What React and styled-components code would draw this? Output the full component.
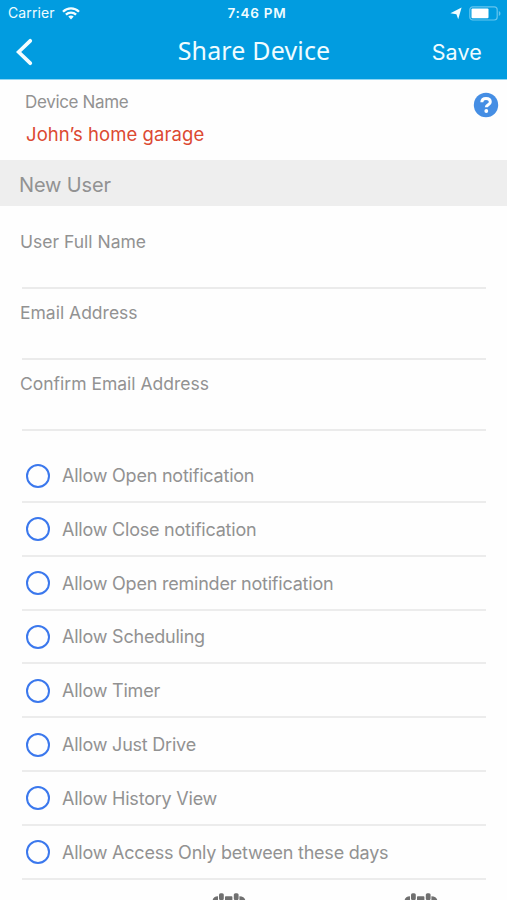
import React, { useState } from 'react';
import styled, { createGlobalStyle } from 'styled-components';

const GlobalStyle = createGlobalStyle`
  * {
    box-sizing: border-box;
  }

  body {
    margin: 0;
    background: #fefefe;
    overflow: hidden;
    font-family: Inter, "Liberation Sans", sans-serif;
  }
`;

// Page and header

const Page = styled.div`
  width: 507px;
  height: 900px;
  display: flex;
  flex-direction: column;
  overflow: hidden;
  background: #fefefe;
  color: #929292;
`;

const Header = styled.header`
  flex: none;
  height: 80px;
  background: #019ce0;
  border-bottom: 1px solid #8fd6f3;
  color: #effcff;
`;

const StatusBar = styled.div`
  height: 27px;
  display: grid;
  grid-template-columns: 1fr auto 1fr;
  align-items: center;
  padding: 0 6px 1px 8px;
  font-size: 14px;
  letter-spacing: 0.12px;
  line-height: 26px;
`;

const StatusGroup = styled.div`
  display: flex;
  align-items: center;
  gap: ${(props) => props.$gap};
  justify-content: ${(props) => (props.$end ? 'flex-end' : 'flex-start')};
`;

const Clock = styled.div`
  margin-left: 5px;
  font-size: 13.5px;
  font-weight: 600;
  letter-spacing: 0.75px;
`;

const NavBar = styled.div`
  height: 52px;
  display: grid;
  grid-template-columns: 1fr auto 1fr;
  align-items: center;
  padding: 0 25px 3px 16px;
`;

const NavButton = styled.button`
  display: flex;
  justify-self: ${(props) => props.$side};
  padding: 0;
  border: none;
  background: none;
  color: inherit;
  font-family: inherit;
  font-size: 21.5px;
  letter-spacing: 0.15px;
  cursor: pointer;
`;

const Title = styled.h1`
  margin: 0 0 3px 10px;
  font-family: "Noto Sans", sans-serif;
  font-size: 25px;
  font-weight: 400;
  letter-spacing: 0.16px;
  line-height: 40px;
`;

// Device and form

const Device = styled.section`
  flex: none;
  height: 80px;
  display: flex;
  justify-content: space-between;
  align-items: flex-start;
  padding: 11px 8px 0 25px;
`;

const DeviceLabel = styled.div`
  font-size: 17px;
  letter-spacing: -0.33px;
  line-height: 22px;
`;

const DeviceName = styled.div`
  margin: 10px 0 0 1px;
  font-size: 18.5px;
  letter-spacing: 0.07px;
  line-height: 22px;
  color: #dc4932;
`;

const HelpButton = styled.button`
  display: flex;
  padding: 0;
  margin-top: 1px;
  border: none;
  background: none;
  cursor: pointer;
`;

const SectionTitle = styled.h2`
  flex: none;
  height: 46px;
  margin: 0;
  padding: 2px 19px 0;
  background: #eeeeee;
  font-size: 20px;
  font-weight: 400;
  letter-spacing: -0.15px;
  line-height: 46px;
`;

const Form = styled.div`
  padding: 12px 21px 0 22px;
`;

const Field = styled.label`
  display: flex;
  flex-direction: column;
  height: 71px;
  padding-top: 13px;
  border-bottom: 2px solid #ebebeb;
  font-size: 17.5px;
  line-height: 22px;

  span {
    margin-left: -2px;
  }
`;

const Input = styled.input`
  width: 100%;
  height: 30px;
  padding: 0;
  border: none;
  outline: none;
  background: transparent;
  color: #555;
  font: inherit;
`;

const Options = styled.div`
  padding: 18.2px 21px 0 22px;
`;

const Option = styled.button`
  width: 100%;
  height: 53.8px;
  display: flex;
  align-items: center;
  gap: 12px;
  padding: 1px 0 0 4px;
  border: none;
  border-bottom: 2px solid #ececec;
  background: none;
  color: inherit;
  font-family: inherit;
  font-size: 18px;
  letter-spacing: -0.22px;
  text-align: left;
  cursor: pointer;
`;

const Radio = styled.span`
  flex: none;
  width: 24px;
  height: 24px;
  border: 2px solid #3b78ed;
  border-radius: 50%;
  background: ${(props) => (props.$on ? '#3b78ed' : 'transparent')};
`;

const Calendars = styled.div`
  display: flex;
  gap: 157.5px;
  padding: 13px 0 0 212px;
`;

const WifiIcon = () => (
  <svg width="18" height="13" viewBox="0 0 18 13" fill="none" stroke="#f3fdff" strokeWidth="2.3">
    <path d="M1 4.7C5.5.2 12.5.2 17 4.7" />
    <path d="M3.9 7.7c2.9-2.8 7.3-2.8 10.2 0" />
    <path d="M6.3 9.6c1.5-1.4 3.9-1.4 5.4 0L9 12.5z" fill="#f3fdff" stroke="none" />
  </svg>
);

const LocationIcon = () => (
  <svg width="12" height="13" viewBox="0 0 12 13" fill="#f3fdff">
    <path d="M11.6.5 8.2 12.3 6.4 7.2.4 6.3z" />
  </svg>
);

const BatteryIcon = () => (
  <svg width="32" height="15" viewBox="0 0 32 15" fill="none">
    <rect x=".8" y=".8" width="27.4" height="13.2" rx="3" stroke="#65c5ee" strokeWidth="1.2" />
    <rect x="2.5" y="2.5" width="17" height="9.8" rx="1" fill="#fff" />
    <path d="M29.8 5v5c2.2-.8 2.2-4.2 0-5z" fill="#65c5ee" />
  </svg>
);

const BackIcon = () => (
  <svg width="17" height="28" viewBox="0 0 17 28" fill="none">
    <path d="M14.2 2.8 2.6 14l11.6 11.2" stroke="#f3fdff" strokeWidth="3.7" strokeLinecap="round" />
  </svg>
);

const HelpIcon = () => (
  <svg width="26" height="26" viewBox="0 0 26 26" fill="none">
    <circle cx="13" cy="13" r="12.2" fill="#458ee4" />
    <path
      d="M8.8 10.3c.1-2.6 1.8-3.9 4.2-3.9 2.6 0 4.3 1.4 4.3 3.5 0 2.8-4 2.7-4 5.4"
      stroke="#fff"
      strokeWidth="3"
    />
    <circle cx="13.3" cy="19" r="1.9" fill="#fff" />
  </svg>
);

const CalendarIcon = () => (
  <svg width="34" height="32" viewBox="0 0 34 32" fill="#707070">
    <path d="M6 3.2V9h7V4q0-.8.8-.8h5.800q.8 0 .8.8v5h7V3.200c3.800 0 6 2 6 5V27c0 3-2 5-5 5H5.500c-3 0-5-2-5-5V8.200c0-3 2-5 5.500-5z" />
    <rect x="7" y=".2" width="4.8" height="7" rx="1.6" />
    <rect x="21.8" y=".2" width="4.8" height="7" rx="1.6" />
  </svg>
);

const fields = ['User Full Name', 'Email Address', 'Confirm Email Address'];

const options = [
  'Allow Open notification',
  'Allow Close notification',
  'Allow Open reminder notification',
  'Allow Scheduling',
  'Allow Timer',
  'Allow Just Drive',
  'Allow History View',
  'Allow Access Only between these days',
];

const App = () => {
  const [selected, setSelected] = useState([]);

  const toggle = (name) => {
    if (selected.includes(name)) {
      setSelected(selected.filter((item) => item !== name));
    } else {
      setSelected([...selected, name]);
    }
  };

  return (
    <Page>
      <GlobalStyle />
      <Header>
        <StatusBar>
          <StatusGroup $gap="7px">
            Carrier
            <WifiIcon />
          </StatusGroup>
          <Clock>7:46 PM</Clock>
          <StatusGroup $gap="7px" $end>
            <LocationIcon />
            <BatteryIcon />
          </StatusGroup>
        </StatusBar>
        <NavBar>
          <NavButton $side="start" aria-label="Back">
            <BackIcon />
          </NavButton>
          <Title>Share Device</Title>
          <NavButton $side="end">Save</NavButton>
        </NavBar>
      </Header>

      <Device>
        <div>
          <DeviceLabel>Device Name</DeviceLabel>
          <DeviceName>John’s home garage</DeviceName>
        </div>
        <HelpButton aria-label="Help">
          <HelpIcon />
        </HelpButton>
      </Device>

      <SectionTitle>New User</SectionTitle>

      <Form>
        {fields.map((name) => (
          <Field key={name}>
            <span>{name}</span>
            <Input />
          </Field>
        ))}
      </Form>

      <Options>
        {options.map((name) => (
          <Option key={name} onClick={() => toggle(name)}>
            <Radio $on={selected.includes(name)} />
            {name}
          </Option>
        ))}
      </Options>

      <Calendars>
        <CalendarIcon />
        <CalendarIcon />
      </Calendars>
    </Page>
  );
};

export default App;
